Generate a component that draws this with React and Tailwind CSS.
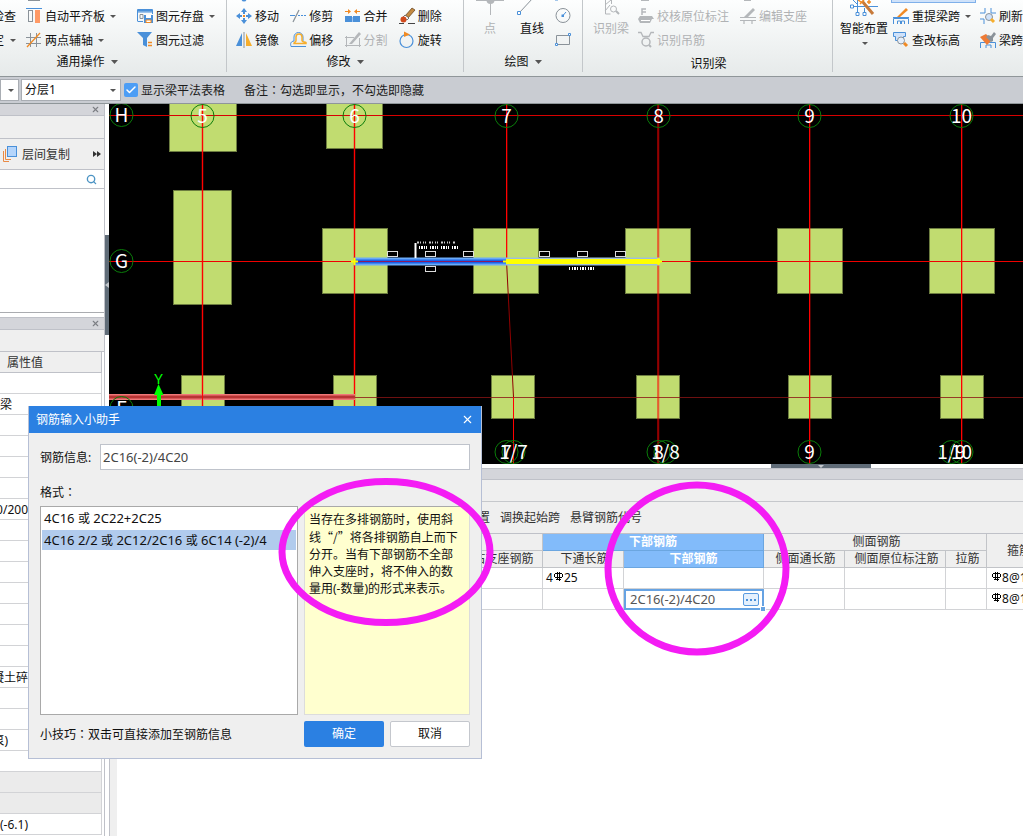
import React from "react";
import { Check, Search, X } from "lucide-react";

const BLUE = "#4a90d9";
const ORANGE = "#f08a24";
const GREY = "#8a9299";
const DIM = "#b4b7ba";

function Icon({ children }) {
    return (
        <svg width="16" height="16" viewBox="0 0 16 16" fill="none" className="shrink-0 overflow-visible" aria-hidden="true">
            {children}
        </svg>
    );
}

const icons = {
    align: (
        <Icon>
            <path d="M2 -8h12" stroke={GREY} strokeWidth="2" />
            <path d="M0 .5h16" stroke={BLUE} />
            <rect x="2.5" y="2.5" width="4" height="11" stroke={GREY} />
            <rect x="9" y="2" width="5" height="13" fill="#ff9a66" />
        </Icon>
    ),
    axis: (
        <Icon>
            <path d="M4.5 1v14M10.5 1v14M0 5.5h15M0 11.5h15" stroke={GREY} />
            <path d="M1 15 14 1" stroke={ORANGE} strokeWidth="1.3" />
        </Icon>
    ),
    save: (
        <Icon>
            <path d="M.5 13V1.5h15V6M.5 4h15M.5 13.5H6" stroke={BLUE} />
            <path d="M1 2.5h14" stroke={BLUE} strokeWidth="2" />
            <path d="M3 6.5h3v4H3z" stroke={GREY} />
            <path d="M7 7h9v8H7z" fill={BLUE} />
            <path d="M9 7h5v3H9z" fill="#fff" />
            <path d="M9 12h5v2.5H9z" fill="#fff" stroke={ORANGE} />
        </Icon>
    ),
    filter: (
        <Icon>
            <path d="M0 0h15L10 6v9l-4-2V6z" fill={BLUE} />
            <path d="M11 10.5h4M11 13.5h4" stroke={ORANGE} strokeWidth="1.4" />
        </Icon>
    ),
    move: (
        <Icon>
            <circle cx="8" cy="-9" r="2.5" fill={BLUE} />
            <path d="M8 0l3 4H9v2H7V4H5zM8 16l3-4H9v-2H7v2H5zM0 8l4-3v2h2v2H4v2zM16 8l-4-3v2h-2v2h2v2z" fill={BLUE} />
            <path d="M7 7h2v2H7z" fill={ORANGE} />
        </Icon>
    ),
    trim: (
        <Icon>
            <path d="M0 7.5h5M8 7.5h2M11 7.5h2M14 7.5h2" stroke={BLUE} strokeWidth="1.2" />
            <path d="M3 14 9 2" stroke={GREY} strokeWidth="1.2" />
        </Icon>
    ),
    merge: (
        <Icon>
            <path d="M0 8h7v6H0zM8 8h7v6H8z" fill={BLUE} />
            <path d="M7 9h1v5H7z" fill="#9cc4f2" />
            <path d="M0 3.5h5M15 3.5h-5" stroke={ORANGE} />
            <path d="M3 1l3 2.5L3 6zM12 1l-3 2.5L12 6z" fill={ORANGE} />
        </Icon>
    ),
    erase: (
        <Icon>
            <path d="M0 15.5h5M9 15.5h7" stroke="#444" />
            <path d="M6 8l7-8 3 2-7 8z" fill="#c48a42" stroke="#5b3b18" strokeWidth=".7" />
            <path d="M6 7l4 3-2 2-4-3z" fill="#fff" stroke="#444" strokeWidth=".7" />
            <circle cx="4.5" cy="11.5" r="3" fill="#d0491c" />
        </Icon>
    ),
    mirror: (
        <Icon>
            <path d="M6 1v13H0z" fill={BLUE} />
            <path d="M8 0v16" stroke={GREY} />
            <path d="M10 1v13h6z" fill="#f6ae2d" />
        </Icon>
    ),
    offset: (
        <Icon>
            <path d="M16 14.5H1C0 11 1 9.500 4 9V5a4.500 4.500 0 0 1 9 0v4" stroke={BLUE} />
            <path d="M4 11.500h12v-1c-1-1-4 0-4-2V5c0-4-6-4-6 0v3.500c0 2-2 1-2 3z" stroke="#f6ae2d" strokeWidth="1.5" />
        </Icon>
    ),
    split: (
        <Icon>
            <path d="M1.5 4v11M14.5 6v9M0 5.5h9M0 13.5h16" stroke={DIM} />
            <path d="M4 12 14 0l2 2L7 12z" fill={DIM} />
        </Icon>
    ),
    rotate: (
        <Icon>
            <circle cx="7.5" cy="9" r="6.5" stroke={BLUE} strokeWidth="1.2" />
            <path d="M5-.5 11 2.500 5 5z" fill={ORANGE} />
        </Icon>
    ),
    circle: (
        <Icon>
            <path d="M0-8.500h3" stroke={BLUE} strokeWidth="2" />
            <circle cx="8" cy="7.5" r="7" stroke={GREY} />
            <path d="M8 7.5 11 4" stroke={BLUE} />
            <rect x="6.5" y="6.5" width="2.5" height="2.5" fill={BLUE} />
        </Icon>
    ),
    rect: (
        <Icon>
            <path d="M1.5 3.5h13v9h-13z" stroke={GREY} />
            <path d="M.5 11.5h2v2h-2zM13.5 1.500h2v2h-2z" stroke={BLUE} fill="#fff" />
        </Icon>
    ),
    check: (
        <Icon>
            <path d="M3-8h8" stroke={DIM} strokeWidth="2" />
            <path d="M4 7V1h4M4 4h4" stroke={DIM} strokeWidth="1.5" />
            <path d="M2 8h12l2 3H0zM0 11h14l-2 4H2z" fill={DIM} />
            <path d="M3 12.5h9" stroke="#fff" />
        </Icon>
    ),
    hook: (
        <Icon>
            <path d="M0 .5h3l2 4h6l2-4h3" stroke={DIM} strokeWidth="1.3" />
            <circle cx="8" cy="10" r="4" stroke={DIM} strokeWidth="1.5" />
            <path d="M11 13l2 2" stroke={DIM} strokeWidth="2" />
        </Icon>
    ),
    support: (
        <Icon>
            <path d="M4-8h7" stroke={DIM} strokeWidth="2" />
            <path d="M0 9.5h16M0 12.5h16M4 13v3M12 13v3" stroke={DIM} strokeWidth="1.2" />
            <path d="M4 9 13 0l2 2-8 8z" fill={DIM} />
        </Icon>
    ),
    respan: (
        <Icon>
            <path d="M.5 16v-5.500h15V16M4.500 16v-3h3v3M8.500 16v-3h3v3M0 9.500h16" stroke={BLUE} />
            <path d="M4 9 13 0l2 2-8 7z" fill={ORANGE} />
        </Icon>
    ),
    height: (
        <Icon>
            <path d="M.5.5h12v4h-2v4h-8v-4h-2z" fill="#cfe2fa" stroke={BLUE} />
            <circle cx="8" cy="8.5" r="3.5" fill="#e4effc" stroke={GREY} />
            <path d="M11 11l3 3" stroke={ORANGE} strokeWidth="3" />
        </Icon>
    ),
    refresh: (
        <Icon>
            <path d="M5 0v5H0M11 0v5h5M0 11h4v5" stroke={BLUE} />
            <circle cx="9" cy="9" r="3.5" fill="#cfe2fa" stroke={GREY} />
            <path d="M11 11l3 3" stroke="#f6ae2d" strokeWidth="3" />
        </Icon>
    ),
    brush: (
        <Icon>
            <path d="M.5 16v-5.500h15V16M6 16v-3h5v3" stroke={BLUE} />
            <path d="M0 5l6-3 6 6-5 5z" fill="#ee7b35" />
            <path d="M8 3l3 1 3-4 2 2-3 4v3l-2 1-5-5z" fill={GREY} />
        </Icon>
    ),
};

function Caret() {
    return (
        <svg width="6" height="3" viewBox="0 0 6 3" className="ml-[2px] shrink-0" aria-hidden="true">
            <path d="M0 0h6L3 3z" fill="#555" />
        </svg>
    );
}

// full-width colon, centred in its box
function Colon() {
    return <span className="font-['Noto_Sans_CJK_TC',sans-serif]">：</span>;
}

function Tool({ icon, text, caret, disabled }) {
    return (
        <button
            disabled={disabled}
            className="flex h-6 items-center gap-[3px] whitespace-nowrap text-[#101010] disabled:text-[#b0b2b4]"
        >
            {icons[icon]}
            <span className="pt-px">{text}</span>
            {caret && <Caret />}
        </button>
    );
}

function GroupMenu({ text, className }) {
    return (
        <button className={"flex h-7 items-center justify-center gap-1 " + className}>
            {text}
            <svg width="7" height="4" viewBox="0 0 7 4" className="ml-[2px]" aria-hidden="true">
                <path d="M0 0h7L3.5 4z" fill="#555" />
            </svg>
        </button>
    );
}

function Ribbon() {
    return (
        <header className="flex h-[77px] overflow-hidden border-b border-[#8f9699] bg-gradient-to-b from-[#fdfefe] to-[#e6eaea] pb-1">
            <section className="flex w-[227px] shrink-0 flex-col border-r border-[#c3c7ca] pt-1">
                <div className="flex h-12">
                    <div className="flex w-4 flex-col items-end">
                        <button className="h-6 pt-px whitespace-nowrap">检查</button>
                        <button className="flex h-6 items-center gap-1 whitespace-nowrap"><span className="pt-px">锁定</span><Caret /></button>
                    </div>
                    <div className="ml-[10px] w-[111px]">
                        <Tool icon="align" text="自动平齐板" caret />
                        <Tool icon="axis" text="两点辅轴" caret />
                    </div>
                    <div>
                        <Tool icon="save" text="图元存盘" caret />
                        <Tool icon="filter" text="图元过滤" />
                    </div>
                </div>
                <GroupMenu text="通用操作" className="pr-[52px]" />
            </section>

            <section className="flex w-[237px] shrink-0 flex-col border-r border-[#c3c7ca] pt-1">
                <div className="grid h-12 grid-cols-4 gap-x-[11px] pr-[21px] pl-[9px]">
                    <Tool icon="move" text="移动" />
                    <Tool icon="trim" text="修剪" />
                    <Tool icon="merge" text="合并" />
                    <Tool icon="erase" text="删除" />
                    <Tool icon="mirror" text="镜像" />
                    <Tool icon="offset" text="偏移" />
                    <Tool icon="split" text="分割" disabled />
                    <Tool icon="rotate" text="旋转" />
                </div>
                <GroupMenu text="修改" />
            </section>

            <section className="flex w-[119px] shrink-0 flex-col border-r border-[#c3c7ca]">
                <div className="flex h-13 pl-[14px]">
                    <button disabled className="flex w-6 flex-col items-center text-[#b0b2b4]">
                        <svg width="28" height="20" viewBox="0 0 28 20" className="shrink-0" aria-hidden="true">
                            <path d="M0 .5h28M14.500 0v15" stroke={DIM} />
                            <circle cx="14.5" cy="0" r="4" fill={DIM} />
                        </svg>
                        点
                    </button>
                    <button className="ml-[18px] flex w-6 flex-col items-center whitespace-nowrap">
                        <svg width="24" height="20" viewBox="0 0 24 20" className="shrink-0 overflow-visible" aria-hidden="true">
                            <path d="M0 12 13-2" stroke={GREY} />
                            <path d="M-2.500 11.500h3v3h-3z" fill="#fff" stroke={BLUE} />
                        </svg>
                        直线
                    </button>
                    <div className="ml-[11px] pt-1">
                        <button aria-label="圆" className="flex h-6 items-center">{icons.circle}</button>
                        <button aria-label="矩形" className="flex h-6 items-center">{icons.rect}</button>
                    </div>
                </div>
                <GroupMenu text="绘图" />
            </section>

            <section className="flex w-[250px] shrink-0 flex-col border-r border-[#c3c7ca]">
                <div className="flex h-13 pl-[10px]">
                    <button disabled className="flex w-9 flex-col items-center whitespace-nowrap text-[#b0b2b4]">
                        <svg width="20" height="20" viewBox="0 0 20 20" fill="none" className="shrink-0" aria-hidden="true">
                            <path d="M4.500 0v14h5M10.500 0v4M4 5l6-5M4 11l5-6" stroke={DIM} />
                            <circle cx="12.5" cy="9" r="3" stroke={DIM} />
                            <path d="M15 11l3 3" stroke={DIM} strokeWidth="2" />
                        </svg>
                        识别梁
                    </button>
                    <div className="ml-[9px] w-[102px] pt-1">
                        <Tool icon="check" text="校核原位标注" disabled />
                        <Tool icon="hook" text="识别吊筋" disabled />
                    </div>
                    <div className="pt-1">
                        <Tool icon="support" text="编辑支座" disabled />
                    </div>
                </div>
                <h2 className="flex h-7 items-center justify-center pt-[3px] pl-[2px]">识别梁</h2>
            </section>

            <section className="flex flex-1 pl-[7px]">
                <button className="flex w-12 shrink-0 flex-col items-center whitespace-nowrap">
                    <svg width="30" height="20" viewBox="0 0 30 20" fill="none" className="shrink-0" aria-hidden="true">
                        <path d="M1 6.500h28M8.500 0v14M15.500 8v6M4 0l5 5" stroke={BLUE} />
                        <path d="M1.500 5h3v3h-3zM7 12.500h3v3H7zM14 12.500h3v3h-3z" fill="#fff" stroke={BLUE} />
                        <path d="M13 1l11 13" stroke="#c77a3a" strokeWidth="3" />
                        <path d="M11 4l4-4M20 0v4M18 2h4M9 0l3 2" stroke={ORANGE} strokeWidth="1.5" />
                    </svg>
                    智能布置
                    <span className="pt-1"><Caret /></span>
                </button>
                <div className="ml-[5px] w-[87px] shrink-0">
                    <div className="-ml-[2px] h-[3px] w-[85px] border border-t-0 border-[#7fb0ea] bg-[#cfe2fa]" />
                    <div className="pt-px">
                        <Tool icon="respan" text="重提梁跨" caret />
                        <Tool icon="height" text="查改标高" />
                    </div>
                </div>
                <div className="pt-1">
                    <Tool icon="refresh" text="刷新" />
                    <Tool icon="brush" text="梁跨" />
                </div>
            </section>
        </header>
    );
}

function Select({ label, value, className }) {
    return (
        <div className={"relative h-[22px] shrink-0 " + className}>
            <select aria-label={label} className="h-full w-full appearance-none border border-[#a9adb3] bg-white pl-[3px]">
                <option>{value}</option>
            </select>
            <span className="pointer-events-none absolute top-[10px] right-[5px]"><Caret /></span>
        </div>
    );
}

function OptionsBar() {
    return (
        <div className="flex h-[27px] items-center overflow-hidden border-b border-[#8f9699] bg-[#c9ccd2]">
            <Select label="楼层" value="" className="w-[19px]" />
            <Select label="分层" value="分层1" className="ml-[2px] w-[100px]" />
            <span className="relative ml-[3px] flex">
                <input id="show-table" type="checkbox" defaultChecked className="h-[14px] w-[14px] appearance-none rounded-xs bg-[#4c9df5]" />
                <Check size={12} strokeWidth={3} className="pointer-events-none absolute top-px left-px text-white" />
            </span>
            <label htmlFor="show-table" className="ml-[3px] pt-px whitespace-nowrap text-[#1c1c1c]">显示梁平法表格</label>
            <span className="ml-[19px] pt-px whitespace-nowrap text-[#1c1c1c]">备注<Colon />勾选即显示，不勾选即隐藏</span>
        </div>
    );
}

function PanelTitle() {
    return (
        <div className="flex h-3 shrink-0 items-center justify-end border-b border-[#bfc1c8] bg-[#d4d5da] pr-1">
            <button aria-label="关闭"><X size={9} strokeWidth={3} className="text-[#7b7e84]" /></button>
        </div>
    );
}

const propertyRows = [
    "", "梁", "", "", "", "", "500/200", "", "", "", "", "", "", "", "混凝土碎", "", "", "(泵)", "",
];

function Sidebar() {
    return (
        <aside className="flex w-[105px] shrink-0 flex-col overflow-hidden border-r border-[#bfc1c8] bg-white">
            <PanelTitle />
            <div className="h-[23px] shrink-0 border-b border-[#bfc1c8] bg-[#efefef]" />
            <div className="flex h-[31px] shrink-0 items-center border-b border-[#bfc1c8] bg-[#efefef] pl-[3px]">
                <button className="flex items-center gap-1 whitespace-nowrap text-[#333]">
                    <svg width="15" height="16" viewBox="0 0 15 16" fill="none" aria-hidden="true">
                        <path d="M.5 5v10.500H6M2.500 3v10.500H8" stroke="#e98a45" />
                        <rect x="4.5" y=".5" width="9" height="10" fill="#b5d5fb" stroke={BLUE} />
                    </svg>
                    <span className="pt-px">层间复制</span>
                </button>
                <button aria-label="更多" className="ml-auto">
                    <svg width="8" height="6" viewBox="0 0 8 6" className="mr-[3px]" aria-hidden="true">
                        <path d="M0 0l4 3-4 3zM4 0l4 3-4 3z" fill="#333" />
                    </svg>
                </button>
            </div>
            <div className="flex h-[19px] shrink-0 items-center border-b border-[#bfc1c8] pr-[7px]">
                <input aria-label="搜索" className="w-full min-w-0" />
                <Search size={11} strokeWidth={3} className="shrink-0 text-[#4d94c4]" />
            </div>
            <div className="h-[124px] shrink-0 border-b border-[#aaacb0]" />
            <div className="mt-1 border-t border-[#bfc1c8]">
                <PanelTitle />
            </div>
            <div className="h-[22px] shrink-0 border-b border-[#bfc1c8] bg-[#efefef]" />
            <table className="w-[102px] table-fixed border-separate border-spacing-0">
                <thead>
                    <tr className="h-[21px]">
                        <th className="border-r border-b border-[#bfc1c8] bg-[#efefef] p-0 pt-px pl-[7px] text-left leading-4 font-normal text-[#333]">属性值</th>
                    </tr>
                </thead>
                <tbody>
                    {propertyRows.map((value, i) => (
                        <tr key={i} className="h-[21px]">
                            <td className="border-r border-b border-[#d2d3d6] p-0">
                                {/* long values run off the left side of the column */}
                                <div className="flex w-7 justify-end pt-px leading-4 whitespace-nowrap">
                                    <span className={value === "梁" ? "mr-4" : value === "(泵)" ? "mr-5" : ""}>{value}</span>
                                </div>
                            </td>
                        </tr>
                    ))}
                    <tr className="h-[21px]"><td className="border-r border-b border-[#d2d3d6] bg-[#ebebeb]" /></tr>
                    <tr className="h-[21px]"><td className="border-r border-b border-[#d2d3d6] bg-[#ebebeb]" /></tr>
                    <tr className="h-[21px]"><td className="border-r border-b border-[#d2d3d6] p-0 pt-px leading-4">(-6.1)</td></tr>
                </tbody>
            </table>
        </aside>
    );
}

// [x, y, width, height]
const columns = [
    [169, 90, 67, 61], [326, 90, 56, 58], [173, 190, 58, 114],
    [322, 228, 65, 65], [473, 228, 65, 65], [625, 228, 65, 65], [777, 228, 65, 65], [929, 228, 65, 65],
    [181, 375, 43, 43], [333, 375, 43, 43], [491, 375, 43, 43], [636, 375, 43, 43], [788, 375, 43, 43], [940, 375, 43, 43],
];

// [x, y, label]
const bubbles = [
    [121, 115, "H"], [121, 261, "G"], [121, 408, "F"],
    [202, 116, "5"], [354, 116, "6"], [506, 116, "7"], [658, 116, "8"], [809, 116, "9"], [961, 116, "10"],
    [506, 452, "7"], [513, 452, "1/7"], [658, 452, "8"], [665, 452, "1/8"], [809, 452, "9"], [951, 452, "1/9"], [961, 452, "10"],
];

const marks = [[387, 251], [425, 251], [463, 251], [425, 266], [539, 251], [577, 251], [615, 251]];

function ModelCanvas() {
    return (
        <svg className="h-90 w-full bg-black" role="img" aria-label="梁平面图">
            <g transform="translate(-109 -104)">
                {columns.map(([x, y, w, h]) => (
                    <rect key={x + "-" + y} x={x + 0.5} y={y + 0.5} width={w} height={h} fill="#c1dc70" stroke="#6d7d40" />
                ))}
                <path d="M354 397.5H1100" stroke="#8a1414" strokeOpacity=".8" />
                <path d="M109 115.5H1100" stroke="#d80000" />
                <path d="M109 261.5H1100" stroke="#f00000" />
                <path d="M810.5 104V464M962.5 104V464M507.5 104V261M659 104V464" stroke="#f00" strokeOpacity=".3" />
                <path d="M202.5 104V464M354.5 104V464" stroke="#f00" strokeWidth="1.4" />
                <path d="M506.5 104V261M658 104V464M809.5 104V464M961.5 104V464" stroke="#f00" />
                <path d="M506.5 261L513.5 397" stroke="#900000" />
                <path d="M513.5 397V464" stroke="#f00" />

                <path d="M109 397H355" stroke="#f07878" strokeWidth="6" />
                <path d="M109 397H355" stroke="#b83434" strokeWidth="3" />
                <path d="M202.5 390V404" stroke="#f00" />

                {bubbles.map(([x, y, label]) => (
                    <g key={label + y}>
                        <circle cx={x + 0.5} cy={y} r="11.5" fill="none" stroke="#0a7d0a" />
                        <text x={x + 0.5} y={y + 7} textAnchor="middle" fontSize="19" fill="#fff" className="font-['Noto_Sans_CJK_SC',sans-serif]">{label}</text>
                    </g>
                ))}

                <path d="M354 261.5H506" stroke="#6aaaf8" strokeWidth="8" />
                <path d="M354 261.5H506" stroke="#1763ea" strokeWidth="4" />
                <path d="M354 261.5H506" stroke="#8a1a60" />
                <path d="M506 261.5H660" stroke="#9fbfd8" strokeWidth="8" />
                <path d="M506 261.5H660" stroke="#ff0" strokeWidth="5" />
                <path d="M351 261.5h7M354.5 258v7M656 261.5h6M658.5 258v7M503 261.5h4" stroke="#ff0" strokeWidth="2" />

                {marks.map(([x, y]) => (
                    <rect key={x + "-" + y} x={x + 0.5} y={y + 0.5} width="10" height="5" fill="#000" stroke="#ddd" />
                ))}
                <path d="M415.5 243v15" stroke="#fff" strokeWidth="2" />
                <path d="M417 242.5h38" stroke="#ccc" strokeWidth="2" strokeDasharray="2 1 1 2 1 1 1 3" />
                <path d="M419 247.5h40" stroke="#fff" strokeWidth="3" strokeDasharray="1 1 2 1 1 1 1 3" />
                <path d="M569 268.5h26" stroke="#fff" strokeWidth="3" strokeDasharray="1 2 1 1 2 1" />

                <text x="158.5" y="384" textAnchor="middle" fontSize="15" fill="#0f0">Y</text>
                <path d="M154 395l4.5-11 5 11z" fill="#0f0" />
                <path d="M159 394v14" stroke="#0f0" strokeWidth="4" />
            </g>
        </svg>
    );
}

function Rebar() {
    return (
        <svg width="9" height="9" viewBox="0 0 9 9" fill="none" className="mx-px inline-block align-[1px]" shapeRendering="crispEdges" aria-hidden="true">
            <path d="M1 1.500h7M1 5.500h7M.5 2v3M8.500 2v3M3.500 0v7M5.500 0v9M2 7.500h5" stroke="#000" />
        </svg>
    );
}

const head = "border-r border-b border-[#c2c4c8] bg-[#efefef] p-0 pl-[3px] font-normal text-[#333] leading-4 whitespace-nowrap";
const active = "border-r border-b border-[#6ba6e0] bg-[#82bbfa] p-0 font-bold text-white leading-4 whitespace-nowrap";
const cell = "border-r border-b border-[#d2d3d6] p-0 leading-4 whitespace-nowrap";

function BeamTable() {
    return (
        <table className="w-[932px] table-fixed border-separate border-spacing-0 border-t border-[#bfc1c8]">
            <colgroup>
                <col className="w-[345px]" />
                <col className="w-[81px]" />
                <col className="w-[81px]" />
                <col className="w-[140px]" />
                <col className="w-[81px]" />
                <col className="w-[101px]" />
                <col className="w-[41px]" />
                <col className="w-[62px]" />
            </colgroup>
            <thead>
                <tr className="h-[17px]">
                    <th className={head} colSpan={2} />
                    <th className={active} colSpan={2}>下部钢筋</th>
                    <th className={head} colSpan={3}>侧面钢筋</th>
                    <th className={head} rowSpan={2}>箍筋</th>
                </tr>
                <tr className="h-[17px]">
                    <th className={head} />
                    <th className={head}>右支座钢筋</th>
                    <th className={head}>下通长筋</th>
                    <th className={active}>下部钢筋</th>
                    <th className={head}>侧面通长筋</th>
                    <th className={head}>侧面原位标注筋</th>
                    <th className={head}>拉筋</th>
                </tr>
            </thead>
            <tbody>
                <tr className="h-[21px]">
                    <td className={cell} />
                    <td className={cell} />
                    <td className={cell}><span className="pl-[3px]">4<Rebar />25</span></td>
                    <td className={cell} />
                    <td className={cell} />
                    <td className={cell} />
                    <td className={cell} />
                    <td className={cell}><span className="pl-[4px]"><Rebar />8@100</span></td>
                </tr>
                <tr className="h-[21px]">
                    <td className={cell} />
                    <td className={cell} />
                    <td className={cell} />
                    <td className="p-0">
                        <div className="relative flex h-[21px] items-center border-2 border-[#66a3e3] pr-[3px] pl-1">
                            <input aria-label="下部钢筋" defaultValue="2C16(-2)/4C20" className="w-full min-w-0 text-[13px] text-[#555]" />
                            <button aria-label="钢筋输入小助手" className="flex h-[13px] w-4 shrink-0 items-center justify-center gap-[2px] rounded-xs border border-[#5a9be0] bg-[#e4f0fd]">
                                <i className="h-[2px] w-[2px] bg-[#4a90d9]" />
                                <i className="h-[2px] w-[2px] bg-[#4a90d9]" />
                                <i className="h-[2px] w-[2px] bg-[#4a90d9]" />
                            </button>
                            <i className="absolute -right-1 -bottom-1 h-[6px] w-[6px] border border-white bg-[#66a3e3]" />
                        </div>
                    </td>
                    <td className={cell} />
                    <td className={cell} />
                    <td className={cell} />
                    <td className={cell}><span className="pl-[4px]"><Rebar />8@100</span></td>
                </tr>
            </tbody>
        </table>
    );
}

function BeamPanel() {
    return (
        <div className="flex flex-1 flex-col border-t border-l border-[#bfc1c8] bg-[#efefef]">
            <div className="h-[11px] border-b border-[#bfc1c8] bg-[#d4d5da]" />
            <div className="h-[22px] border-b border-[#c6c8cc]" />
            <div className="flex h-[31px] items-center gap-[10px] overflow-hidden whitespace-nowrap text-[#333]">
                <button className="w-[380px] shrink-0 text-right">置</button>
                <button>调换起始跨</button>
                <button>悬臂钢筋代号</button>
            </div>
            <div className="ml-[7px] flex-1 overflow-hidden bg-white">
                <BeamTable />
            </div>
        </div>
    );
}

function RebarDialog() {
    return (
        <div role="dialog" aria-label="钢筋输入小助手" className="absolute top-[406px] left-7 w-[454px] border border-t-0 border-[#b6bfd5] bg-[#efefef]">
            <div className="flex h-[27px] items-center justify-between bg-[#2b80e2] px-[7px] text-white">
                <span>钢筋输入小助手</span>
                <button aria-label="关闭"><X size={13} strokeWidth={2} /></button>
            </div>
            <div className="px-[11px] pt-[11px] pb-[11px]">
                <div className="flex items-center">
                    <label htmlFor="rebar-info" className="w-[60px] shrink-0 pt-px">钢筋信息:</label>
                    <input id="rebar-info" defaultValue="2C16(-2)/4C20" className="h-[26px] min-w-0 flex-1 border border-[#bfc3cb] bg-white px-[2px] text-[13px] text-[#444]" />
                </div>
                <div className="mt-[14px] h-[22px] leading-4">格式<Colon /></div>
                <div className="flex h-[209px] gap-[6px]">
                    <ul className="w-[258px] border border-[#a9a9a9] bg-white p-px text-[13px]">
                        <li className="h-[22px] pl-[2px] leading-5">4C16 <span className="text-[12px]">或</span> 2C22+2C25</li>
                        <li className="h-5 bg-[#b1cbed] pl-[2px] leading-5">4C16 2/2 <span className="text-[12px]">或</span> 2C12/2C16 <span className="text-[12px]">或</span> 6C14 (-2)/4</li>
                    </ul>
                    <p className="flex-1 border border-[#dcdcdc] border-t-[#a9a9a9] bg-[#ffffcf] pt-1 pl-1 leading-[17px] whitespace-nowrap">
                        当存在多排钢筋时，使用斜<br />
                        线<span className="font-['Noto_Sans_CJK_SC',sans-serif]">“/”</span>将各排钢筋自上而下<br />
                        分开。当有下部钢筋不全部<br />
                        伸入支座时，将不伸入的数<br />
                        量用(-数量)的形式来表示。
                    </p>
                </div>
                <div className="mt-[6px] flex items-center gap-[6px]">
                    <span className="w-[258px] pt-px">小技巧<Colon />双击可直接添加至钢筋信息</span>
                    <button className="h-[26px] w-20 rounded-xs bg-[#2b80e2] text-white">确定</button>
                    <button className="h-[26px] w-20 rounded-xs border border-[#c4c7cd] bg-white">取消</button>
                </div>
            </div>
        </div>
    );
}

function App() {
    return (
        <div className="relative flex min-h-screen flex-col overflow-hidden bg-white font-['Noto_Sans','Noto_Sans_CJK_SC',sans-serif] text-[12px] text-[#101010]">
            <Ribbon />
            <OptionsBar />
            <main className="flex flex-1">
                <Sidebar />
                <div className="w-1 shrink-0 pt-[131px]">
                    <button aria-label="折叠" className="flex h-[100px] w-1 items-center bg-[#606c78]">
                        <svg width="4" height="6" viewBox="0 0 4 6" aria-hidden="true"><path d="M4 0v6L0 3z" fill="#c3c7cc" /></svg>
                    </button>
                </div>
                <section className="flex min-w-0 flex-1 flex-col">
                    <ModelCanvas />
                    <div className="flex h-1 pl-[662px]">
                        <button aria-label="折叠表格" className="flex h-1 w-[100px] items-center justify-center bg-[#606c78]">
                            <svg width="6" height="3" viewBox="0 0 6 3" aria-hidden="true"><path d="M0 0h6L3 3z" fill="#c3c7cc" /></svg>
                        </button>
                    </div>
                    <BeamPanel />
                </section>
            </main>
            <RebarDialog />
            <svg className="pointer-events-none absolute inset-0 h-full w-full" fill="none" aria-hidden="true">
                <ellipse cx="386" cy="552" rx="104" ry="70.5" stroke="#f41cf4" strokeWidth="7" />
                <ellipse cx="697" cy="568.5" rx="89" ry="83.5" stroke="#f41cf4" strokeWidth="7" />
            </svg>
        </div>
    );
}

export default App;
